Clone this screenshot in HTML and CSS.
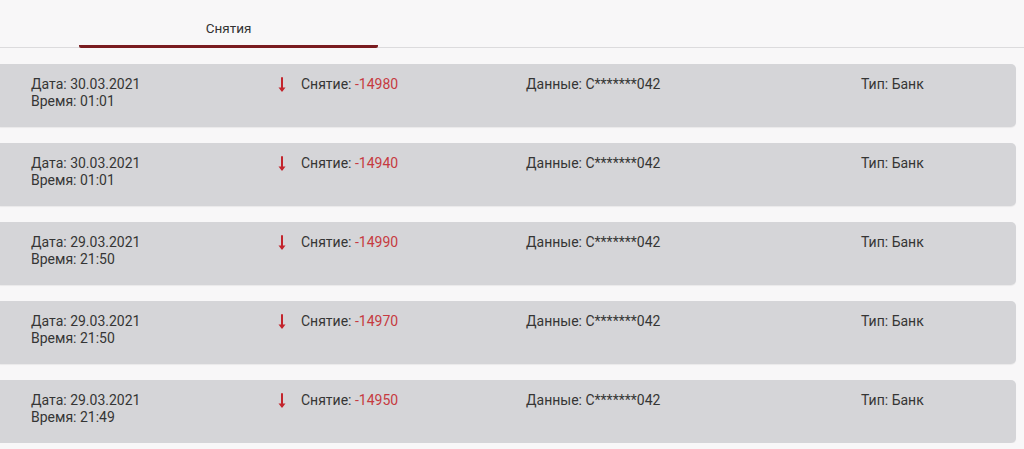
FILE: index.html
```html
<!DOCTYPE html>
<html lang="ru">
<head>
<meta charset="utf-8">
<link rel="stylesheet" href="styles.css">
</head>
<body>
<div class="tabs">
  <div class="tab active">Снятия</div>
</div>
<div class="list">
  <div class="card">
    <div class="col date"><div>Дата: 30.03.2021</div><div>Время: 01:01</div></div>
    <div class="col amount"><svg class="arrow" viewBox="0 0 10 16" width="10" height="16"><path d="M5 1 V13" stroke="#c3242c" stroke-width="2" stroke-linecap="round" fill="none"/><path d="M1.5 10.5 L5 15 L8.5 10.5 Z" fill="#c3242c"/></svg><span>Снятие: <span class="neg">-14980</span></span></div>
    <div class="col">Данные: С*******042</div>
    <div class="col">Тип: Банк</div>
  </div>
  <div class="card">
    <div class="col date"><div>Дата: 30.03.2021</div><div>Время: 01:01</div></div>
    <div class="col amount"><svg class="arrow" viewBox="0 0 10 16" width="10" height="16"><path d="M5 1 V13" stroke="#c3242c" stroke-width="2" stroke-linecap="round" fill="none"/><path d="M1.5 10.5 L5 15 L8.5 10.5 Z" fill="#c3242c"/></svg><span>Снятие: <span class="neg">-14940</span></span></div>
    <div class="col">Данные: С*******042</div>
    <div class="col">Тип: Банк</div>
  </div>
  <div class="card">
    <div class="col date"><div>Дата: 29.03.2021</div><div>Время: 21:50</div></div>
    <div class="col amount"><svg class="arrow" viewBox="0 0 10 16" width="10" height="16"><path d="M5 1 V13" stroke="#c3242c" stroke-width="2" stroke-linecap="round" fill="none"/><path d="M1.5 10.5 L5 15 L8.5 10.5 Z" fill="#c3242c"/></svg><span>Снятие: <span class="neg">-14990</span></span></div>
    <div class="col">Данные: С*******042</div>
    <div class="col">Тип: Банк</div>
  </div>
  <div class="card">
    <div class="col date"><div>Дата: 29.03.2021</div><div>Время: 21:50</div></div>
    <div class="col amount"><svg class="arrow" viewBox="0 0 10 16" width="10" height="16"><path d="M5 1 V13" stroke="#c3242c" stroke-width="2" stroke-linecap="round" fill="none"/><path d="M1.5 10.5 L5 15 L8.5 10.5 Z" fill="#c3242c"/></svg><span>Снятие: <span class="neg">-14970</span></span></div>
    <div class="col">Данные: С*******042</div>
    <div class="col">Тип: Банк</div>
  </div>
  <div class="card">
    <div class="col date"><div>Дата: 29.03.2021</div><div>Время: 21:49</div></div>
    <div class="col amount"><svg class="arrow" viewBox="0 0 10 16" width="10" height="16"><path d="M5 1 V13" stroke="#c3242c" stroke-width="2" stroke-linecap="round" fill="none"/><path d="M1.5 10.5 L5 15 L8.5 10.5 Z" fill="#c3242c"/></svg><span>Снятие: <span class="neg">-14950</span></span></div>
    <div class="col">Данные: С*******042</div>
    <div class="col">Тип: Банк</div>
  </div>
</div>
</body>
</html>
```
FILE: styles.css
```css
html, body {
  margin: 0;
  padding: 0;
  background: #f8f7f8;
  font-family: Roboto, "Liberation Sans", sans-serif;
  color: #353535;
  font-size: 14px;
  overflow: hidden;
}
.tabs {
  height: 47px;
  border-bottom: 1px solid #dcdbdd;
  display: flex;
  padding-left: 79px;
  box-sizing: content-box;
}
.tab {
  width: 299px;
  text-align: center;
  font-size: 13.5px;
  line-height: 16px;
  padding-top: 20px;
  box-sizing: border-box;
  height: 48px;
  border-bottom: 3px solid #7a1c20;
  border-radius: 0 0 2px 2px;
  color: #333;
}
.list {
  display: flex;
  flex-direction: column;
  gap: 16px;
  padding-top: 16px;
  width: 1016px;
}
.card {
  background: #d5d5d8;
  height: 63px;
  border-radius: 0 5px 5px 0;
  display: grid;
  grid-template-columns: 246px 249px 335px 1fr;
  padding: 12px 0 0 31px;
  box-sizing: border-box;
  line-height: 17px;
  box-shadow: 0 1px 1px rgba(0,0,0,0.06);
}
.amount {
  display: flex;
  align-items: flex-start;
  gap: 14px;
}
.arrow {
  margin-top: 1px;
  flex: none;
}
.neg {
  color: #c63a40;
}
```
